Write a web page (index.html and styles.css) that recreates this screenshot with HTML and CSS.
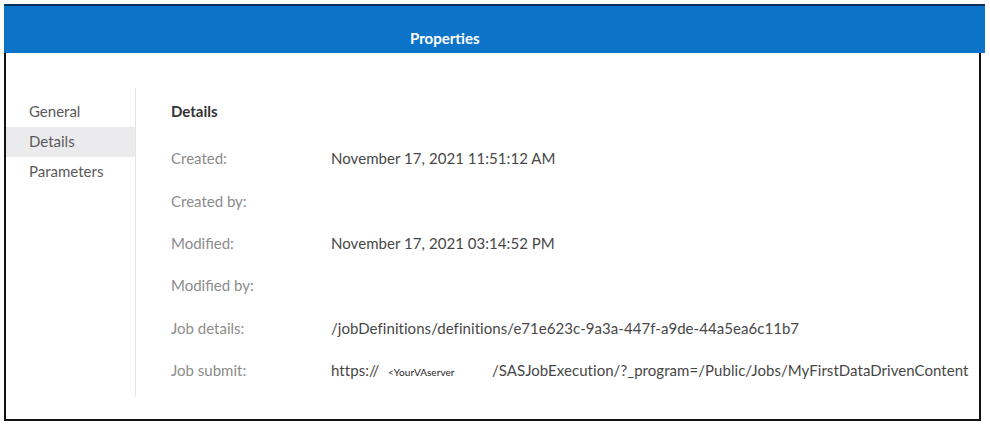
FILE: index.html
```html
<!DOCTYPE html>
<html>
  <head>
    <meta charset="UTF-8">
    <link rel="stylesheet" href="styles.css">
  </head>
  <body>
    <div class="window">
      <div class="titlebar">Properties</div>
      <div class="panel">
        <ul class="sidenav">
          <li>General</li>
          <li class="active">Details</li>
          <li>Parameters</li>
        </ul>
        <div class="details">
          <h2>Details</h2>
          <div class="row">
            <span class="label">Created:</span>
            <span class="value">November 17, 2021 11:51:12 AM</span>
          </div>
          <div class="row">
            <span class="label">Created by:</span>
            <span class="value"></span>
          </div>
          <div class="row">
            <span class="label">Modified:</span>
            <span class="value">November 17, 2021 03:14:52 PM</span>
          </div>
          <div class="row">
            <span class="label">Modified by:</span>
            <span class="value"></span>
          </div>
          <div class="row">
            <span class="label">Job details:</span>
            <span class="value">/jobDefinitions/definitions/e71e623c-9a3a-447f-a9de-44a5ea6c11b7</span>
          </div>
          <div class="row">
            <span class="label">Job submit:</span>
            <span class="value"><span class="scheme">https://</span><span class="server">&lt;YourVAserver</span>/SASJobExecution/?_program=/Public/Jobs/MyFirstDataDrivenContent</span>
          </div>
        </div>
      </div>
    </div>
  </body>
</html>
```

FILE: styles.css
```css
html, body {
  margin: 0;
  background: #fff;
}
body {
  font-family: Lato, "Noto Sans", sans-serif;
  padding: 4px 0 0 4px;
}

.window {
  width: 973px;
  height: 415px;
  border: 2px solid #111;
  border-top: none;
  background: #fff;
}

.titlebar {
  height: 30px;
  margin: 0 -6px 0 -2px;
  border-top: 2px solid #0b2f5c;
  background: #0b74c8;
  color: #fff;
  font-weight: 700;
  font-size: 15px;
  line-height: 30px;
  padding: 17px 0 0 406px;
}

.panel {
  display: flex;
  margin-top: 35px;
}

.sidenav {
  list-style: none;
  margin: 0;
  padding: 9px 0 0;
  width: 129px;
  height: 300px;
  border-right: 1px solid #e4e4e6;
}
.sidenav li {
  height: 30px;
  line-height: 29px;
  padding-left: 23px;
  font-size: 15px;
  color: #5a5a5a;
}
.sidenav li.active {
  background: #ebebee;
}

.details {
  padding: 9px 0 0 35px;
  flex: 1;
}
.details h2 {
  margin: 0 0 10px;
  height: 30px;
  line-height: 29px;
  font-size: 15px;
  font-weight: 700;
  color: #333;
}

.row {
  display: flex;
  height: 42.4px;
  align-items: center;
  font-size: 15px;
  white-space: nowrap;
}
.label {
  width: 160px;
  color: #8c8c8c;
}
.value {
  color: #474747;
  letter-spacing: 0.05px;
}
.scheme {
  display: inline-block;
  width: 57px;
}
.server {
  display: inline-block;
  width: 104px;
  font-size: 10px;
  color: #222;
}
```
